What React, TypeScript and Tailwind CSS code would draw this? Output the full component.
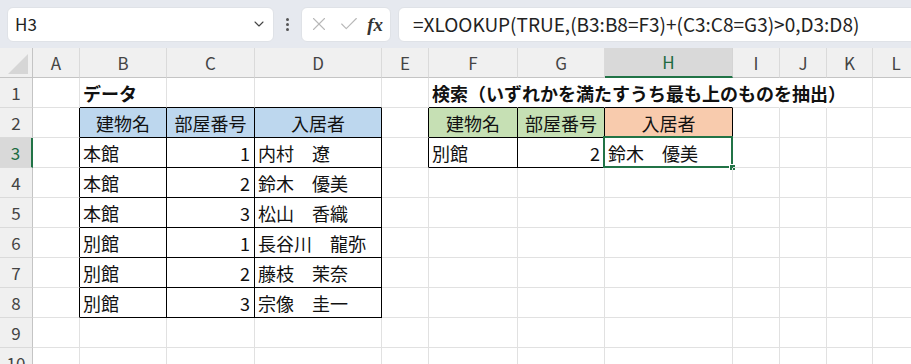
import { ChevronDown, X, Check } from "lucide-react";

const cols = ["A", "B", "C", "D", "E", "F", "G", "H", "I", "J", "K", "L"];
const rows = [1, 2, 3, 4, 5, 6, 7, 8, 9, 10];

type Cell = { v: string; align?: "left" | "center" | "right"; bold?: boolean; fill?: string };

const blue = "bg-[#bdd7ee]";
const green = "bg-[#c6e0b4]";
const peach = "bg-[#f8cbad]";

const cells: Record<string, Cell> = {
  B1: { v: "データ", bold: true },
  F1: { v: "検索（いずれかを満たすうち最も上のものを抽出）", bold: true },
  B2: { v: "建物名", align: "center", fill: blue },
  C2: { v: "部屋番号", align: "center", fill: blue },
  D2: { v: "入居者", align: "center", fill: blue },
  B3: { v: "本館" }, C3: { v: "1", align: "right" }, D3: { v: "内村　遼" },
  B4: { v: "本館" }, C4: { v: "2", align: "right" }, D4: { v: "鈴木　優美" },
  B5: { v: "本館" }, C5: { v: "3", align: "right" }, D5: { v: "松山　香織" },
  B6: { v: "別館" }, C6: { v: "1", align: "right" }, D6: { v: "長谷川　龍弥" },
  B7: { v: "別館" }, C7: { v: "2", align: "right" }, D7: { v: "藤枝　茉奈" },
  B8: { v: "別館" }, C8: { v: "3", align: "right" }, D8: { v: "宗像　圭一" },
  F2: { v: "建物名", align: "center", fill: green },
  G2: { v: "部屋番号", align: "center", fill: green },
  H2: { v: "入居者", align: "center", fill: peach },
  F3: { v: "別館" }, G3: { v: "2", align: "right" }, H3: { v: "鈴木　優美" },
};

// cells with black borders
const inTable = (r: number, c: number) =>
  (r >= 2 && r <= 8 && c >= 1 && c <= 3) || (r >= 2 && r <= 3 && c >= 5 && c <= 7);

// gridlines hidden under the overflowing title in F1
const spill = (r: number, c: number) => r === 1 && c >= 5 && c <= 9;

function GridCell({ r, c }: { r: number; c: number }) {
  const key = cols[c] + r;
  const cell = cells[key];
  const right = inTable(r, c) || inTable(r, c + 1)
    ? "border-r-black"
    : spill(r, c)
    ? "border-r-transparent"
    : "border-r-[#e1e1e1]";
  const bottom = inTable(r, c) || inTable(r + 1, c) ? "border-b-black" : "border-b-[#e1e1e1]";
  const align =
    cell?.align === "center" ? "justify-center" : cell?.align === "right" ? "justify-end pr-[4px]" : "justify-start pl-[3px]";
  const selected = key === "H3";

  return (
    <div
      className={`relative flex items-center h-[30px] border-r border-b ${right} ${bottom} ${cell?.fill ?? ""} ${align}`}
    >
      {cell && (
        <span className={`whitespace-nowrap pt-[1px] ${cell.bold ? "font-bold" : ""}`}>{cell.v}</span>
      )}
      {selected && (
        <>
          <div className="absolute left-[-2px] top-[-2px] right-[-1px] bottom-[-1px] border-2 border-[#217346]" />
          <div className="absolute right-[-4px] bottom-[-4px] w-[7px] h-[7px] bg-[#217346] border border-white" />
        </>
      )}
    </div>
  );
}

export default function App() {
  return (
    <div
      className="w-[911px] h-[364px] overflow-hidden bg-white text-[18px] text-[#111]"
      style={{ fontFamily: '"Noto Sans CJK JP", "Noto Sans", sans-serif' }}
    >
      {/* Formula bar */}
      <div className="flex items-center h-[48px] bg-[#e6e9ef] pl-[7px] gap-0">
        <div className="flex items-center justify-between w-[267px] h-[35px] bg-white rounded-[6px] border border-[#dfe2e7] pl-[7px] pr-[6px]">
          <span className="text-[17px] text-[#222]">H3</span>
          <ChevronDown size={16} strokeWidth={1.6} className="text-[#444]" />
        </div>
        <div className="flex flex-col items-center justify-center gap-[2px] w-[27px]">
          <span className="w-[3px] h-[3px] bg-[#555] rounded-full" />
          <span className="w-[3px] h-[3px] bg-[#555] rounded-full" />
          <span className="w-[3px] h-[3px] bg-[#555] rounded-full" />
        </div>
        <div className="flex items-center justify-between w-[90px] h-[35px] bg-white rounded-[6px] border border-[#dfe2e7] pl-[6px] pr-[7px]">
          <X size={22} strokeWidth={1.2} className="text-[#b8b8b8]" />
          <Check size={22} strokeWidth={1.2} className="text-[#b8b8b8]" />
          <span
            className="italic font-bold text-[19px] text-[#333] leading-none"
            style={{ fontFamily: '"Liberation Serif", serif' }}
          >
            fx
          </span>
        </div>
        <div className="flex items-center flex-1 h-[35px] ml-[7px] mr-[-8px] bg-white rounded-[6px] border border-[#dfe2e7] pl-[14px]">
          <span className="text-[19px] text-[#222] whitespace-nowrap">=XLOOKUP(TRUE,(B3:B8=F3)+(C3:C8=G3)&gt;0,D3:D8)</span>
        </div>
      </div>

      {/* Sheet grid */}
      <div className="grid grid-cols-[33px_47px_87px_88px_127px_47px_89px_87px_128px_47px_47px_46px_47px]">
        {/* column headers */}
        <div className="relative h-[30px] bg-[#f0f0f0] border-r border-b border-[#c4c4c4]">
          <svg className="absolute right-[4px] bottom-[3px]" width="20" height="20" viewBox="0 0 20 20">
            <polygon points="20,0 20,20 0,20" fill="#d6d6d6" />
          </svg>
        </div>
        {cols.map((col) =>
          col === "H" ? (
            <div
              key={col}
              className="flex items-center justify-center h-[30px] bg-[#d9d9d9] border-r border-r-[#d4d4d4] border-b-2 border-b-[#217346] text-[17px] text-[#1e6b41]"
            >
              {col}
            </div>
          ) : (
            <div
              key={col}
              className="flex items-center justify-center h-[30px] bg-[#f0f0f0] border-r border-r-[#dadada] border-b border-b-[#c4c4c4] text-[17px] text-[#444]"
            >
              {col}
            </div>
          )
        )}

        {rows.map((r) => (
          <div key={r} className="contents">
            {r === 3 ? (
              <div className="flex items-center justify-center h-[30px] bg-[#d9d9d9] border-r-2 border-r-[#217346] border-b border-b-[#dadada] text-[17px] text-[#1e6b41]">
                {r}
              </div>
            ) : (
              <div className="flex items-center justify-center h-[30px] bg-[#f0f0f0] border-r border-r-[#c4c4c4] border-b border-b-[#dadada] text-[17px] text-[#444]">
                {r}
              </div>
            )}
            {cols.map((_, c) => (
              <GridCell key={c} r={r} c={c} />
            ))}
          </div>
        ))}
      </div>
    </div>
  );
}
